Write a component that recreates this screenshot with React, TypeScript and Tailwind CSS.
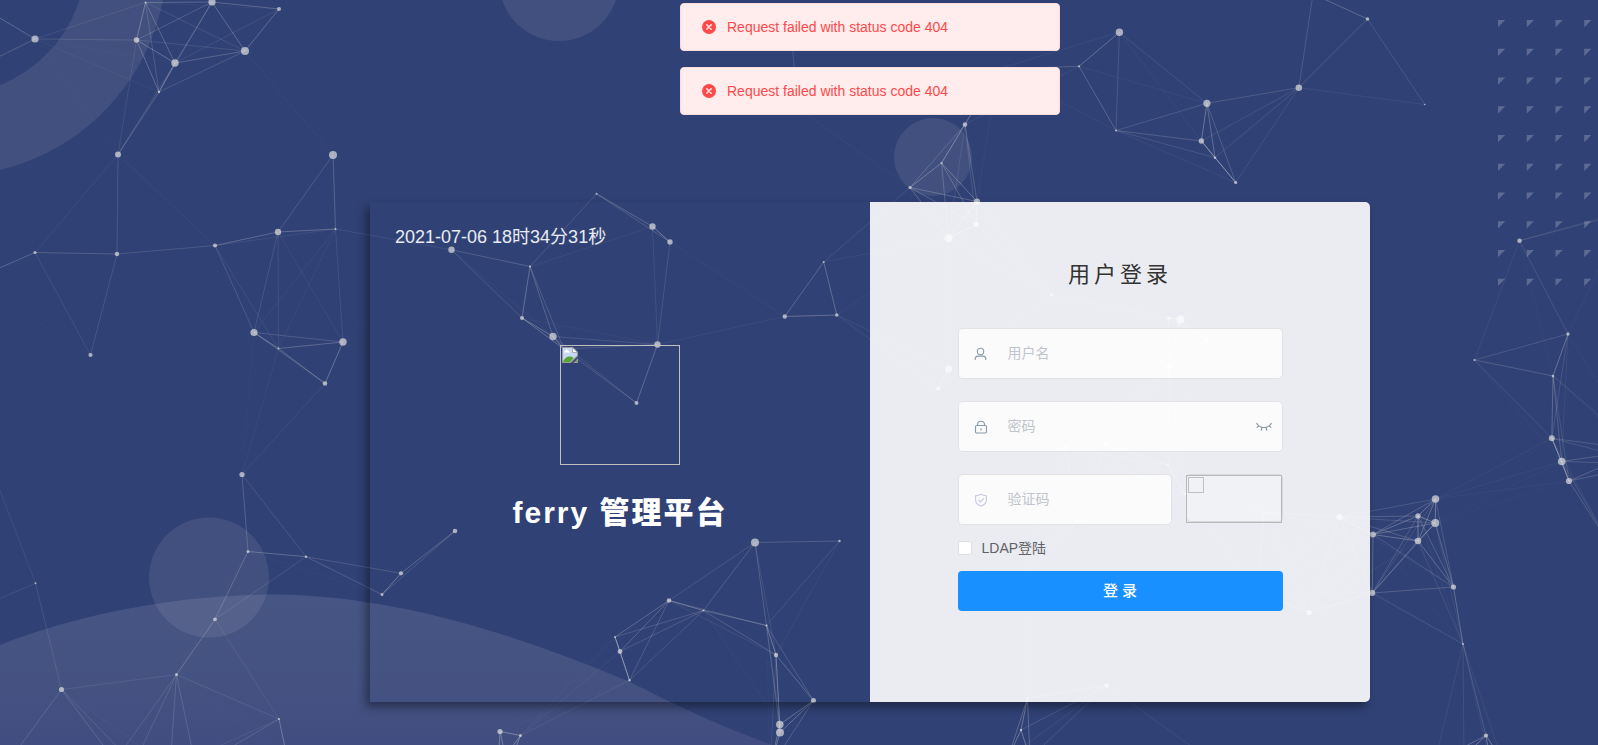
import { useState } from "react";
import type { ReactNode } from "react";

type Point = [x: number, y: number, r: number];

const LINK_DISTANCE = 150;
const LINK_OPACITY = 0.44;

const POINTS: Point[] = [
  [35, 39, 3.6], [145.5, 2.5, 1], [212, 2, 3.6], [279, 9, 2], [136.5, 40, 2.8], [175, 63, 3.7],
  [245, 51, 4], [159, 92, 1.2], [118, 154.5, 3], [333, 155, 4], [35, 252.5, 1.6], [117, 254, 2.2],
  [215, 245.5, 2.1], [278, 232, 3.2], [335.5, 229, 1.1], [90.5, 355, 2.1], [254, 332.5, 3.6],
  [343, 342, 3.7], [278.5, 348.5, 1], [325, 383.5, 2.3], [-20, 6, 2], [-36, 74, 2], [-28, 280, 2],
  [242, 474.5, 2.6], [248, 551.5, 1.5], [306, 556.7, 1.2], [215, 619.3, 1.9], [176.5, 674.6, 1.5],
  [61.5, 689.5, 2.6], [35.5, 583.3, 1], [279, 719, 1.1], [-7, 472, 2], [-70, 628, 2], [115, 761, 2],
  [134, 764, 2], [170, 768, 2], [196, 768, 2], [288, 762, 2], [4, 768, 2],
  [596.5, 193.8, 1], [652.5, 226.5, 3.2], [670, 242, 2.7], [451.5, 249.8, 3.2], [530, 266.5, 1.1],
  [522, 318, 2], [553, 336.5, 3.7], [657.5, 344.5, 3.2], [636.5, 403, 2], [564, 349, 1],
  [784.8, 316.5, 2.2], [836.8, 315, 1.8], [823.7, 262, 1],
  [455, 531, 2.3], [401, 573.3, 2.1], [382, 594.5, 1.5], [755, 542.5, 4], [839.5, 541, 1.2],
  [669, 600.5, 2.3], [703.5, 610.5, 1], [766.5, 625.5, 1.1], [615, 637, 1], [620, 651.5, 2.4],
  [629.5, 680.3, 1.2], [776, 655, 2.2], [813.5, 700.5, 2.5], [779.8, 724.5, 3.8], [780, 732.5, 4],
  [500, 731.5, 2.6], [520.5, 735.5, 1.5], [498, 766, 2], [508, 768, 2], [770, 768, 2],
  [965, 124.5, 2.3], [941.5, 163, 1.1], [910, 187.5, 1.6], [977, 201.5, 3.1], [976.3, 224.5, 2.6],
  [948.5, 238.3, 4], [998, 69, 1], [797, 108, 2], [790, 10, 2],
  [1051.5, 295, 1.3], [1168.5, 318, 1.5], [1180.5, 319.5, 4], [1207, 340, 2.4], [1169, 367, 2.8],
  [948.5, 369, 3.6], [938, 388.5, 2.1], [1066, 448, 2.8], [1106, 443.5, 2.8], [1168, 465, 1],
  [1185, 494, 1.2], [1077, 521, 2], [1023, 573, 1], [1258, 592, 2], [1264, 512, 0.5],
  [1339.5, 517, 3], [1309, 612.5, 2.6], [1106.5, 685.7, 2.1], [1027.5, 698, 1], [1021, 730, 1.2],
  [1008, 758, 2], [1030, 758, 2], [1208, 758, 2], [1302, 758, 2],
  [1119.4, 32.3, 3.7], [1079, 66.3, 1.1], [1116, 130.5, 1], [1206.9, 103.3, 3.6], [1201.4, 141, 2.7],
  [1215, 157.7, 1.2], [1235.7, 182.5, 1.6], [1298.8, 87.7, 3.3], [1367.5, 19, 1.8], [1424.8, 104.5, 0.8],
  [1313, -6, 2], [1519.5, 240.7, 2.3], [1568, 334, 1.7], [1474.5, 360, 1.1], [1553, 376, 1.3],
  [1551.8, 438.3, 3], [1561.7, 461.5, 3.8], [1569, 481, 3.1], [1435.5, 499, 3.8], [1418, 516, 2.7],
  [1435.3, 523, 4], [1373, 534.5, 2.9], [1418, 541, 3.3], [1453.5, 587, 2.6], [1372.3, 593, 3],
  [1463, 644, 1], [1486, 735.5, 2.1], [1464, 756, 2], [1491, 768, 2], [1502, 760, 2], [1435, 762, 2],
  [1625, 213, 2], [1640, 207, 2], [1640, 450, 2], [1650, 464, 2], [1612, 548, 2],
];

const LINKS = POINTS.flatMap(([x1, y1], i) =>
  POINTS.slice(i + 1).flatMap(([x2, y2]) => {
    const distance = Math.hypot(x2 - x1, y2 - y1);
    return distance < LINK_DISTANCE
      ? [{ x1, y1, x2, y2, opacity: LINK_OPACITY * (1 - distance / LINK_DISTANCE) }]
      : [];
  }),
);

const GRID_COLUMNS = [0, 1, 2, 3];
const GRID_ROWS = [0, 1, 2, 3, 4, 5, 6, 7, 8, 9];

function Backdrop() {
  return (
    <svg className="pointer-events-none absolute inset-0 h-full w-full" aria-hidden="true">
      <defs>
        <linearGradient id="hill" x1="0" y1="590" x2="0" y2="745" gradientUnits="userSpaceOnUse">
          <stop offset="0" stopColor="#475584" />
          <stop offset="0.5" stopColor="#455382" />
          <stop offset="1" stopColor="#414d80" />
        </linearGradient>
      </defs>
      <path
        d="M0 645 C80 614 175 595 275 594.500 C400 596 520 636 630 682 C680 707 715 724 772 745 V2000 H0 Z"
        fill="url(#hill)"
      />
      <circle cx="-51" cy="-42" r="177.5" fill="none" stroke="#f4e6e0" strokeOpacity="0.09" strokeWidth="81" />
      <g fill="#f4e6e0" fillOpacity="0.09">
        <circle cx="559" cy="-19" r="60" />
        <circle cx="209" cy="577.5" r="60" />
        <circle cx="933" cy="157" r="39" />
      </g>
      <g fill="#fff" fillOpacity="0.22">
        {GRID_ROWS.map((row) =>
          GRID_COLUMNS.map((column) => (
            <path
              key={`${row}-${column}`}
              d="M0 0H7.200L0 7.200Z"
              transform={`translate(${1498 + column * 28.75} ${20 + row * 28.75})`}
            />
          )),
        )}
      </g>
      <g stroke="#dedede">
        {LINKS.map(({ opacity, ...ends }, i) => (
          <line key={i} {...ends} strokeOpacity={opacity} />
        ))}
      </g>
      <g fill="#dedede" fillOpacity="0.7">
        {POINTS.map(([x, y, r], i) => (
          <circle key={i} cx={x} cy={y} r={r} />
        ))}
      </g>
    </svg>
  );
}

function Toast({ children }: { children: ReactNode }) {
  return (
    <div
      role="alert"
      className="flex h-12 w-[380px] items-center gap-2.5 rounded border border-[#ffdbdb] bg-[#ffeded] px-5 text-sm text-[#ff4949]"
    >
      <svg viewBox="0 0 16 16" className="h-4 w-4" aria-hidden="true">
        <circle cx="8" cy="8" r="7" fill="#ff4949" />
        <path d="M5.800 5.800l4.400 4.400M10.200 5.800l-4.400 4.400" stroke="#ffeded" strokeWidth="1.500" strokeLinecap="round" />
      </svg>
      <p>{children}</p>
    </div>
  );
}

function UserIcon() {
  return (
    <svg viewBox="0 0 14 14" className="h-3.5 w-3.5" fill="none" stroke="#889aa4" strokeWidth="1.100" aria-hidden="true">
      <circle cx="6.500" cy="4.500" r="3.200" />
      <path d="M1.200 13v-1a3 3 0 0 1 3-2.900h4.600a3 3 0 0 1 3 2.900V13" />
    </svg>
  );
}

function LockIcon() {
  return (
    <svg viewBox="0 0 14 14" className="h-3.5 w-3.5" fill="none" stroke="#889aa4" strokeWidth="1.100" aria-hidden="true">
      <rect x="1.500" y="5.500" width="11" height="7.500" rx="1.200" />
      <path d="M3.500 5.500V4.500a3.500 3.300 0 0 1 7 0v1M7 8.200v2.200" />
    </svg>
  );
}

function ShieldIcon() {
  return (
    <svg viewBox="0 0 14 14" className="h-3.5 w-3.5" fill="none" stroke="#c5cadd" strokeWidth="1.100" aria-hidden="true">
      <path d="M7 1.200c1.600 1 3.400 1.400 5.400 1.500v4.200c0 3-2.400 5-5.400 6.200-3-1.200-5.400-3.200-5.400-6.200V2.700C3.600 2.600 5.400 2.200 7 1.200Z" />
      <path d="M4.300 6.800l2.100 2.100 3.600-3.600" />
    </svg>
  );
}

function ClosedEyeIcon() {
  return (
    <svg viewBox="0 0 16 10" className="h-2.5 w-4" fill="none" stroke="#889aa4" strokeWidth="1.200" aria-hidden="true">
      <path d="M0.500 1C2 4 5 5.500 8 5.500S14 4 15.500 1M2.800 3.700L0.800 5.600M5.800 5.300L5.300 8.600M10.200 5.300L10.700 8.600M13.200 3.700L15.200 5.600" />
    </svg>
  );
}

function BrokenImageIcon() {
  return (
    <svg viewBox="0 0 16 16" className="h-4 w-4" aria-hidden="true">
      <path d="M0 0H11L16 5V9L9 16H0Z" fill="#9a9a9a" />
      <path d="M1 1H10.500L15 5.500V8.500L8 15H1Z" fill="#c6d8f5" />
      <path d="M2 5.500a1.300 1.300 0 0 1 1.200-1.500 1.600 1.600 0 0 1 3.200 0A1.200 1.200 0 0 1 8 5.500Z" fill="#fff" />
      <path d="M1 15C2 11.500 5 9.500 8 9.500c1.600 0 2.800.6 3.600 1.500L8 15Z" fill="#55a630" />
      <path d="M10.500 0.500V5.500H15.500Z" fill="#fff" stroke="#9a9a9a" strokeWidth="0.800" />
      <path d="M16 11.500V16H11Z" fill="#9a9a9a" />
      <path d="M15 13.500V15H13Z" fill="#55a630" />
    </svg>
  );
}

type FieldProps = {
  id: string;
  label: string;
  type?: string;
  icon: ReactNode;
  trailing?: ReactNode;
};

function Field({ id, label, type = "text", icon, trailing }: FieldProps) {
  return (
    <div className="flex h-[51px] min-w-0 flex-1 items-center rounded-[5px] border border-black/10 bg-white/80 pr-2.5 pl-[15px]">
      <label htmlFor={id} aria-label={label} className="pt-px">
        {icon}
      </label>
      <input
        id={id}
        type={type}
        placeholder={label}
        className="ml-5 h-[47px] min-w-0 flex-1 bg-transparent pb-0.5 text-sm text-[#606266] outline-none placeholder:text-[#c0c4cc]"
      />
      {trailing}
    </div>
  );
}

export default function App() {
  const [passwordShown, setPasswordShown] = useState(false);

  return (
    <div className="relative min-h-screen overflow-hidden bg-[#304175] font-['Liberation_Sans','Noto_Sans_CJK_SC',sans-serif]">
      <Backdrop />

      <div className="absolute inset-x-0 top-[3px] z-10 flex flex-col items-center gap-4 pl-[142px]">
        <Toast>Request failed with status code 404</Toast>
        <Toast>Request failed with status code 404</Toast>
      </div>

      <main className="relative flex justify-center pt-[202px] pb-[43px] pl-[142px]">
        <div className="grid min-h-[500px] w-full max-w-[1000px] grid-cols-2 rounded-r-[5px] shadow-[-4px_5px_10px_rgba(0,0,0,0.4)]">
          <section className="flex flex-col px-[25px] pt-[21px] text-white">
            <time className="text-lg leading-7 text-white/90">2021-07-06 18时34分31秒</time>
            <div className="mt-[94px] flex flex-col items-center">
              <div role="img" aria-label="logo" className="h-[120px] w-[120px] border border-[#c0c0c0] p-px">
                <BrokenImageIcon />
              </div>
              <h1 className="mt-[26px] text-3xl leading-[44px] font-black tracking-[2px]">ferry 管理平台</h1>
            </div>
          </section>

          <section className="flex justify-center rounded-r-[5px] bg-white/90">
            <form className="w-[65%]" onSubmit={(event) => event.preventDefault()}>
              <h2 className="mt-[57px] mb-[37px] text-center text-[22px] leading-8 font-normal tracking-[4px] text-[#333]">
                用户登录
              </h2>
              <div className="flex flex-col gap-[22px]">
                <div className="flex">
                  <Field id="username" label="用户名" icon={<UserIcon />} />
                </div>
                <div className="flex">
                  <Field
                    id="password"
                    label="密码"
                    type={passwordShown ? "text" : "password"}
                    icon={<LockIcon />}
                    trailing={
                      <button type="button" aria-label="显示密码" onClick={() => setPasswordShown(!passwordShown)}>
                        <ClosedEyeIcon />
                      </button>
                    }
                  />
                </div>
                <div className="flex items-start gap-3.5">
                  <Field id="code" label="验证码" icon={<ShieldIcon />} />
                  <button
                    type="button"
                    aria-label="刷新验证码"
                    className="flex h-12 w-[97px] rounded-[5px] border border-black/10 bg-white/30"
                  >
                    <span className="-ml-px flex h-12 w-24 shrink-0 items-start border border-[#b8b8b8] p-px">
                      <span className="h-4 w-4 border border-[#c0c0c0]" />
                    </span>
                  </button>
                </div>
              </div>
              <label className="mt-3 flex items-center gap-2.5 text-sm leading-[22px] text-[#606266]">
                <input
                  type="checkbox"
                  className="h-3.5 w-3.5 appearance-none rounded-[2px] border border-[#dcdfe6] bg-white checked:bg-[#1890ff]"
                />
                LDAP登陆
              </label>
              <button
                type="submit"
                className="mt-3 h-10 w-full rounded bg-[#1890ff] text-[15px] font-medium text-white"
              >
                登 录
              </button>
            </form>
          </section>
        </div>
      </main>
    </div>
  );
}
